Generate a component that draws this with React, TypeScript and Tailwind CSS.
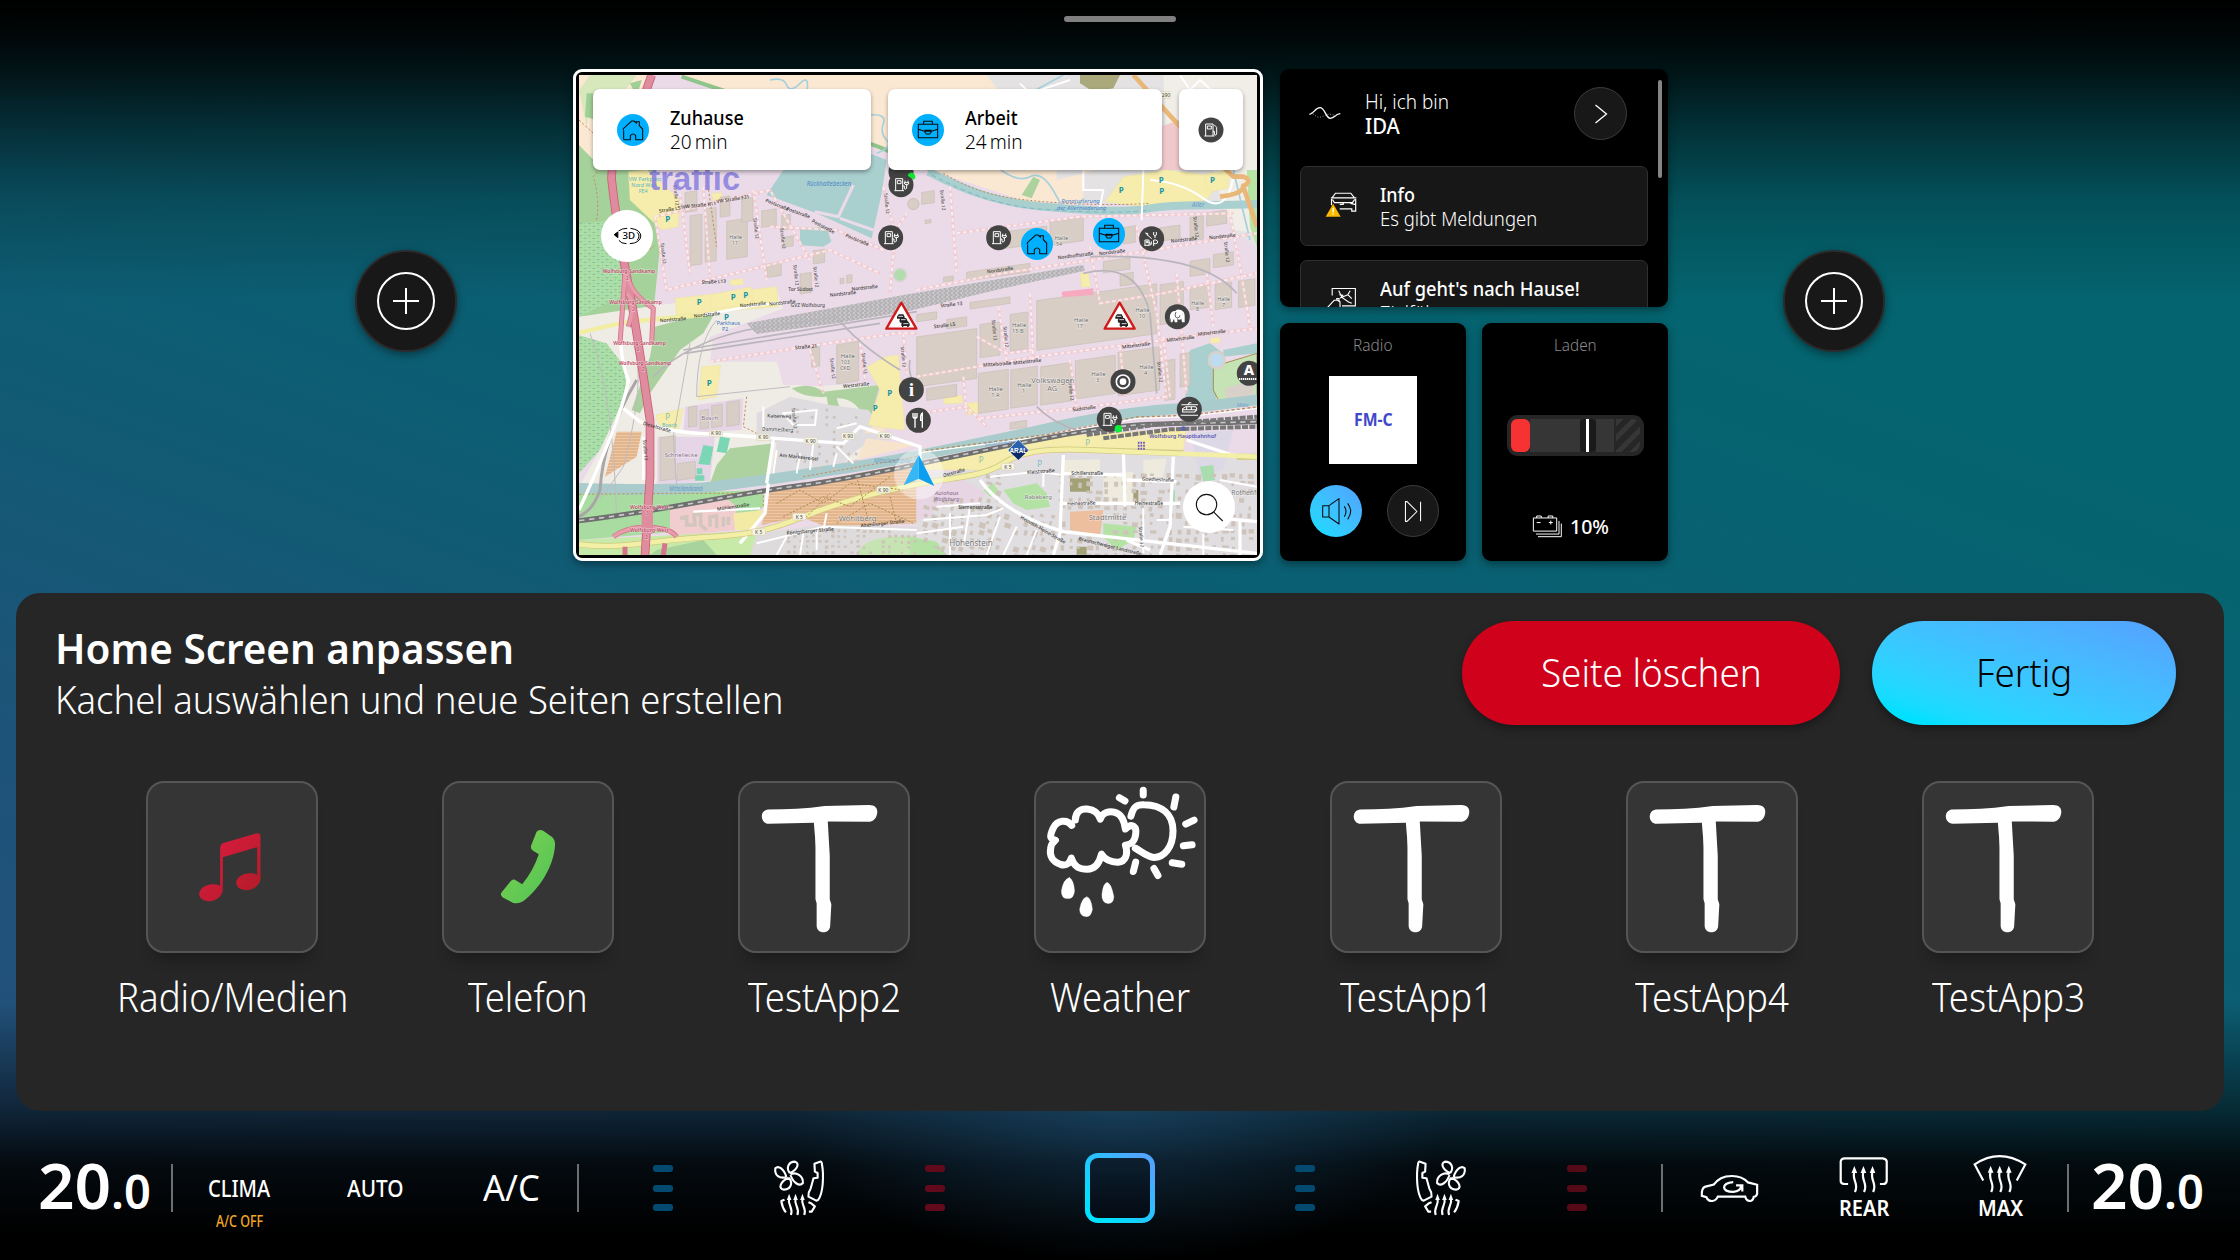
import React, { useLayoutEffect, useRef, useState } from "react";

/* Text squeezed horizontally to the width of its box, for the condensed cockpit typeface. */
function Fit({ children, className = "" }: { children: string; className?: string }) {
  const outer = useRef<HTMLSpanElement>(null);
  const inner = useRef<HTMLSpanElement>(null);
  const [k, setK] = useState(1);
  useLayoutEffect(() => {
    if (outer.current && inner.current) setK(outer.current.clientWidth / inner.current.offsetWidth);
  }, [children]);
  return (
    <span ref={outer} className={`block shrink-0 ${className}`}>
      <span ref={inner} className="inline-block origin-left whitespace-nowrap" style={{ transform: `scaleX(${k})` }}>
        {children}
      </span>
    </span>
  );
}

/* ---------- map ---------- */

const halls: [number, number, number, number][] = [
  [360, 465, 36, 150], [405, 445, 34, 160], [470, 480, 62, 115], [515, 415, 34, 70], [575, 450, 44, 50],
  [450, 410, 30, 60], [590, 610, 44, 40], [690, 640, 34, 60], [730, 570, 34, 40], [345, 395, 36, 60],
  [1280, 510, 150, 50], [1440, 480, 100, 70], [1190, 625, 190, 26], [1660, 500, 36, 50], [1770, 500, 60, 40],
  [1860, 470, 40, 70], [1910, 455, 60, 40], [1600, 600, 80, 34], [1650, 640, 40, 36], [1860, 600, 60, 46],
  [1930, 580, 60, 40], [1860, 680, 60, 66], [1935, 670, 50, 76], [2005, 660, 50, 80],
  [1040, 820, 180, 150], [1230, 790, 60, 100], [1320, 760, 54, 110], [1400, 700, 360, 150], [1770, 670, 70, 120],
  [1225, 935, 90, 120], [1322, 925, 80, 115], [1412, 915, 92, 115], [1516, 895, 120, 115], [1644, 870, 125, 130],
  [1785, 900, 30, 120], [1830, 880, 30, 100], [1070, 980, 90, 36], [1320, 1085, 50, 20],
  [800, 850, 66, 118], [725, 860, 24, 60], [355, 1040, 26, 60], [390, 1050, 26, 56], [425, 1035, 32, 66],
  [470, 1025, 38, 72], [270, 1130, 46, 130], [322, 1208, 54, 50], [1040, 760, 60, 22],
  [1200, 720, 120, 20], [1130, 775, 60, 28], [635, 465, 26, 44], [640, 530, 30, 30], [810, 655, 12, 16], [830, 645, 16, 24],
  [1055, 395, 38, 36], [1065, 480, 18, 10], [1120, 650, 30, 14],
];

const parking = [
  "M175 335L232 330 330 420 325 500 275 510 180 420Z", "M270 455L325 450 325 500 275 508Z", "M315 715L620 680 625 740 320 765Z",
  "M420 705L545 680 548 735 425 745Z", "M395 920L452 916 440 1010 385 1020Z", "M258 1065L340 1045 325 1110 268 1098Z",
  "M945 890L985 885 1005 1110 950 1105 895 1095 930 990 890 920Z", "M1605 425L1660 350 1790 330 1960 350 1910 420 1720 440Z",
  "M1910 340L1980 332 1975 385 1920 395 1905 370Z", "M1050 1205L1450 1130 1850 1105 1840 1170 1430 1160 1240 1230 1060 1230Z",
  "M1530 640L1555 638 1562 680 1535 682Z", "M1120 1010L1175 1005 1178 1030 1122 1032Z", "M1190 1030L1226 1026 1226 1060 1192 1064Z",
  "M425 400L455 398 458 420 430 422Z", "M480 660L520 656 520 674 482 676Z", "M1920 835L1950 832 1950 848 1922 850Z",
];

const pinkRoads = [
  "M255 470L600 390 720 600", "M255 470L290 690 780 570 930 640", "M330 400L360 640", "M400 380L420 650", "M550 390L590 660",
  "M600 500L800 510 940 570 1010 460", "M940 380L975 520 960 700", "M420 905L640 870 980 820 1040 820", "M720 870L760 1000M870 850L885 960M1000 820L1010 940",
  "M1040 690L1300 640 1560 600 2061 520", "M1140 380L1160 640M1160 520L1530 470 1990 460", "M1560 560L1590 730 1780 700 2061 640",
  "M1700 500L1760 760 1790 1020", "M1980 460L2010 620 2040 800", "M1040 950L1400 890 1700 850 2061 805",
  "M1220 830L1310 880 1390 870M1285 740L1310 900M1380 700L1390 900M1500 900L1520 1040M1650 860L1665 1010M1780 830L1800 1010",
  "M1180 950L1190 1060M1230 1075L1520 1045 1790 1010", "M1050 1060L1190 1040 1250 1100", "M1910 640L1930 800", "M1820 640L1850 1000",
];

const hood = (() => {
  const out: [number, number, number, number, number][] = [];
  let s = 11;
  const r = () => ((s = (s * 16807) % 2147483647) / 2147483647);
  for (let x = 1060; x < 2050; x += 27)
    for (let y = 1190; y < 1480; y += 24) {
      if (y < 1235 - (x > 1460 ? 20 : 0)) continue;
      if (x < 1240 && y < 1290) continue;
      if (x > 1300 && x < 1440 && y < 1350) continue;
      if (x > 1480 && x < 1610 && y > 1350 && y < 1410) continue;
      if (r() > 0.2) out.push([x + r() * 8, y + r() * 6, 7 + r() * 13, 7 + r() * 11, x < 1450 ? 18 : 3]);
    }
  for (let x = 650; x < 1040; x += 19)
    for (let y = 1408; y < 1480; y += 16) if (r() > 0.35) out.push([x, y + r() * 4, 6 + r() * 5, 6 + r() * 4, -8]);
  for (let x = 680; x < 900; x += 22)
    for (let y = 1045; y < 1240; y += 22) if (r() > 0.6) out.push([x, y, 8, 8, 20]);
  return out;
})();

const tiny: [string, number, number, number, string][] = [
  ["Straße L51", 268, 458, -9, "#333"], ["VW Straße K11", 338, 446, -6, "#333"], ["VW Straße F31", 440, 430, -9, "#333"],
  ["Poststraße", 585, 425, 22, "#333"], ["Poststraße", 648, 450, 20, "#333"], ["Poststraße", 724, 486, 28, "#333"],
  ["Poststraße", 825, 530, 22, "#333"], ["Nordstraße", 510, 742, -6, "#333"], ["Nordstraße", 598, 737, -6, "#333"],
  ["Nordstraße", 372, 773, -6, "#333"], ["Nordstraße", 270, 787, -5, "#333"], ["Straße L13", 395, 672, -3, "#333"],
  ["Nordstraße", 780, 710, -6, "#333"], ["Nordstraße", 845, 692, -6, "#333"], ["Tor Südost", 655, 692, 0, "#444"],
  ["GVZ Wolfsburg", 662, 740, 0, "#555"], ["Nordstraße", 1252, 640, -8, "#333"], ["Nordhoffstraße", 1464, 598, -7, "#333"],
  ["Nordstraße", 1588, 586, -7, "#333"], ["Nordstraße", 1803, 548, -6, "#333"], ["Nordstraße", 1918, 538, -6, "#333"],
  ["Mittelstraße", 1240, 920, -4, "#333"], ["Mittelstraße", 1330, 914, -6, "#333"], ["Mittelstraße", 1657, 866, -7, "#333"],
  ["Mittelstraße", 1790, 846, -7, "#333"], ["Mittelstraße", 1884, 828, -7, "#333"], ["Südstraße", 1508, 1054, -7, "#333"],
  ["Straße L5", 1092, 805, -7, "#333"], ["Straße 21", 676, 868, -5, "#333"], ["Weststraße", 820, 984, -6, "#333"],
  ["Dieselstraße", 218, 1094, 16, "#333"], ["Kaiserweg", 592, 1072, 2, "#333"], ["Dammesberg", 576, 1112, 2, "#333"],
  ["Am Markekreisel", 628, 1190, 6, "#333"], ["Mühlenstraße", 442, 1352, -8, "#333"], ["Königsberger Straße", 650, 1424, -5, "#333"],
  ["Altenburger Straße", 872, 1402, -6, "#333"], ["Schillerstraße", 1504, 1244, 0, "#333"], ["Heinestraße", 1492, 1336, -2, "#333"],
  ["Heinestraße", 1694, 1334, 0, "#333"], ["Goethestraße", 1716, 1262, 2, "#333"], ["Heinrich-Heine-Straße", 1350, 1375, 30, "#333"],
  ["Braunschweiger Landstraße", 1525, 1440, 14, "#333"], ["Siemensstraße", 1165, 1346, 0, "#333"],
  ["Straße 13", 1112, 742, -6, "#333"], ["Kleiststraße", 1372, 1242, -4, "#333"], ["Oststraße", 1120, 1252, -16, "#333"],
];

const areaLabels: [string, number, number, number, string][] = [
  ["Halle", 484, 538, 16, "#666"], ["11", 492, 556, 16, "#666"], ["Halle", 1460, 540, 17, "#666"], ["54", 1464, 558, 16, "#666"],
  ["Halle", 1518, 785, 18, "#666"], ["17", 1526, 803, 16, "#666"], ["Halle", 1332, 800, 18, "#666"], ["15 B", 1332, 818, 17, "#666"],
  ["Halle", 1702, 756, 18, "#666"], ["10", 1712, 774, 17, "#666"], ["Halle", 1870, 734, 16, "#666"], ["8", 1884, 752, 16, "#666"],
  ["Halle", 1948, 722, 16, "#666"], ["7", 1962, 740, 16, "#666"], ["Halle", 1262, 994, 18, "#666"], ["1 A", 1270, 1012, 17, "#666"],
  ["Halle", 1348, 982, 18, "#666"], ["1", 1362, 1000, 17, "#666"], ["Halle", 1570, 948, 18, "#666"], ["3", 1584, 966, 17, "#666"],
  ["Halle", 1714, 928, 18, "#666"], ["4", 1728, 946, 17, "#666"], ["Halle", 818, 894, 18, "#666"], ["103", 818, 912, 16, "#666"],
  ["CKD", 816, 930, 16, "#666"], ["Bosch", 400, 1079, 18, "#866a8a"], ["Schnellecke", 290, 1192, 18, "#866a8a"],
  ["Volkswagen", 1390, 970, 23, "#777"], ["AG", 1438, 992, 22, "#777"], ["Hohenstein", 1144, 1458, 24, "#777"],
  ["Wohltberg", 812, 1382, 23, "#777"], ["Stadtmitte", 1562, 1380, 23, "#777"], ["Rothenfelde", 1990, 1304, 20, "#777"],
  ["Rabeberg", 1370, 1316, 18, "#777"],
];

function Pin({ x, y, children }: { x: number; y: number; children?: React.ReactNode }) {
  return (
    <g transform={`translate(${x} ${y})`}>
      <circle r="37.5" fill="#434343" />
      <g fill="none" stroke="#fff" strokeWidth="3">{children}</g>
    </g>
  );
}
const Charger = () => (
  <g>
    <path d="M-16 18V-18H5V18M-20 18H9M-11-12H0V-3H-11ZM5 4H10V12Q14 16 17 10V-2M12-12V-5M21-12V-5M10-6H23V-2Q17 5 11-2Z" />
  </g>
);
const Fuel = () => <path d="M-16 18V-18H6V18M-20 18H10M-11-12H1V-3H-11ZM6 4H10V14Q15 18 17 12V-8L9-16" />;
const House = () => (
  <path d="M-28 29V2M-28 29H-8V17Q0 7 8 17V29H29V0M-29 1V-4L-4-27H3L10-21V-25H19V-13L29-3V2" fill="none" stroke="#0b0b0b" strokeWidth="3.2" />
);
const Case = () => (
  <path d="M-29-17H29V23H-29ZM-13-17V-26H13V-17M-29-2L-10 4H10L29-2M-9 1H9V7L5 12H-5L-9 7Z" fill="none" stroke="#0b0b0b" strokeWidth="3.2" />
);
function Jam({ x, y }: { x: number; y: number }) {
  return (
    <g transform={`translate(${x} ${y})`}>
      <path d="M0-50L45 28H-45Z" fill="#fff" stroke="#cf1b1b" strokeWidth="7" strokeLinejoin="round" />
      <path d="M-13-8L-8-15H6L10-8V-2H-13ZM-6 2L-1-4H14L18 3V10H-4ZM0 13L5 6H20L25 13V20H22V23H17V20H6V23H2V20H0Z" fill="#222" />
      <path d="M-9-9H5M-1 1H13M6 13H21" stroke="#fff" strokeWidth="2.5" />
    </g>
  );
}

function CityMap() {
  return (
    <svg viewBox="27 45 2034 1440" className="block h-full w-full" fontFamily="'Noto Sans', sans-serif">
      <defs>
        <pattern id="marsh" width="26" height="18" patternUnits="userSpaceOnUse">
          <rect width="26" height="18" fill="#aedfa8" />
          <path d="M2 5H11M15 13H24" stroke="#63ac96" strokeWidth="2" />
          <path d="M5 14l3-5M18 6l2-4" stroke="#86c47f" strokeWidth="2" />
        </pattern>
        <pattern id="plots" width="20" height="9" patternUnits="userSpaceOnUse">
          <rect width="20" height="9" fill="#e3b58d" />
          <path d="M0 1H20" stroke="#f0d0b0" strokeWidth="2.5" />
        </pattern>
        <pattern id="yard" width="14" height="12" patternUnits="userSpaceOnUse">
          <rect width="14" height="12" fill="#cfcccf" />
          <path d="M0 3H9M4 9H14" stroke="#999" strokeWidth="3" />
        </pattern>
      </defs>
      <rect x="27" y="45" width="2034" height="1440" fill="#ebdbe9" />
      {/* farmland, town and park areas */}
      <path d="M27 45H330L500 100 900 258 1080 330 1370 425 1540 430 1620 400 1600 45ZM27 45V300L180 330 240 45Z" fill="#fbe8d3" />
      <path d="M245 45H335L500 100 900 258 1020 330H170Z" fill="#ebdbe9" />
      <path d="M335 50L500 105 930 262 1080 328" fill="none" stroke="#8fc48a" strokeWidth="12" />
      <path d="M1250 45H2061V560L1990 520 1960 440 1540 430V330H1460V360L1580 330V200L1300 110Z" fill="#e4e2e3" />
      <path d="M1780 45H2061V520L1990 510 1960 440 1930 330 1790 260Z" fill="#f1eee8" />
      <path d="M1530 45H1650L1630 85 1570 95 1530 70Z" fill="#a9a97c" />
      <path d="M1770 200L1830 180 1860 330H1770Z" fill="#f0c9cc" />
      <path d="M1355 405L1390 350 1410 360 1385 415Z" fill="#acd29e" />
      <path d="M2030 330H2061V560L2040 500Z" fill="#b7e3a5" />
      <path d="M27 90L60 45H200L150 110 130 160 110 120 60 140 50 200Z" fill="#cfe7b8" opacity=".8" />
      <path d="M50 100H90L80 180 45 170ZM180 70L215 60 200 110Z" fill="#a0cf95" />
      <path d="M27 255L100 330H250V470L270 560 250 760 27 770Z" fill="#a5d29a" />
      <path d="M27 490L170 480 175 700 27 770Z" fill="url(#marsh)" />
      <path d="M27 825L110 850 165 920 170 1000 90 1170 27 1240Z" fill="url(#marsh)" />
      <path d="M27 770L270 735 620 690 640 745 420 830 380 920 340 1100 255 1280H27L90 1170 170 1000 165 920 110 850 27 825Z" fill="#efece5" />
      <path d="M255 800L440 750 400 820 330 870 240 1000 210 1060 185 1050 240 890Z" fill="#aad09f" />
      <path d="M380 840L640 870 700 980 900 970 890 1190 600 1260 380 1270 320 1150 340 960Z" fill="#efece6" />
      <path d="M430 830L1060 690V970L640 975 620 905 420 905Z" fill="#ebdbe9" />
      <path d="M345 1040L520 1015 515 1110 340 1120ZM262 1130L435 1130 420 1262 262 1272Z" fill="#e6d5e6" />
      <path d="M665 985Q720 965 760 995 850 985 930 975L895 1095Q860 1010 800 1015L808 1040H775L770 1010Q700 1015 665 985Z" fill="#aed29f" />
      <path d="M560 1060L660 1010 780 1035 895 1050 950 1120 860 1170 800 1230 600 1260 620 1150 560 1130Z" fill="#dedcdf" />
      <path d="M880 1120L945 1070 945 1115ZM890 1135L1040 1155 860 1200Z" fill="#f8e3cc" />
      <path d="M480 1165L610 1150 585 1265 420 1270 440 1215Z" fill="#aed29f" />
      <path d="M400 1155L430 1160 420 1215 385 1212ZM450 1130L480 1135 470 1180 440 1175ZM380 1225H397V1243H380ZM375 1246H403V1262H375Z" fill="#7ad6b4" />
      <path d="M140 1115H215L200 1190 105 1250Z" fill="url(#plots)" />
      <path d="M27 1295L300 1300 580 1290 580 1340 500 1400 27 1440Z" fill="#a9dca0" />
      <path d="M300 1350L470 1315 500 1340 495 1410 300 1430Z" fill="#f2cdd0" />
      <path d="M490 1360L580 1350 560 1410 495 1410Z" fill="#f3eaa6" />
      <path d="M27 1440L500 1415 620 1440 560 1485H27Z" fill="#c8eaa9" />
      <path d="M260 1470L400 1440 440 1485H240Z" fill="#a8d39d" />
      <path d="M600 1290L960 1222 1040 1230 1040 1390 770 1400 690 1370 575 1395Z" fill="url(#plots)" />
      <path d="M560 1420L760 1395 1040 1400V1485H540Z" fill="#dddbdc" />
      <path d="M860 1485Q880 1420 1040 1430V1485Z" fill="#c6e3b2" />
      <path d="M1040 1240L1240 1230 1450 1180 2061 1190V1485H1040Z" fill="#e0dee0" />
      <path d="M1040 1270L1170 1255 1250 1300 1220 1330 1100 1340 1080 1370 1040 1380Z" fill="#e8d5e3" />
      <path d="M1300 1290L1400 1270 1430 1300 1440 1340 1370 1350 1330 1330ZM1600 1390L1700 1400 1690 1440 1640 1470 1600 1430ZM1020 1430L1100 1445 1130 1485H1020ZM1240 1290L1270 1270 1290 1300 1260 1310Z" fill="#b4e2a4" />
      <path d="M1500 1355L1600 1350 1590 1425 1500 1410Z" fill="#eebf9f" />
      <path d="M1500 1255H1560V1295H1500ZM1675 1290H1705V1325H1675ZM1520 1460H1550V1485H1520Z" fill="#a3a277" />
      <path d="M1600 1240L1690 1235V1335H1600ZM1480 1200L1590 1198V1240H1480ZM1720 1200L1790 1195 1780 1250 1720 1255Z" fill="#eeeade" />
      <path d="M1860 1120L1990 1110 1960 1230 1890 1250Z" fill="#dcd8e6" />
      <path d="M1890 1220L1930 1215 1935 1260 1900 1265ZM1800 1290H1815V1325H1800Z" fill="#a9ddb0" />
      {parking.map((d) => (<path key={d} d={d} fill="#f6ecab" stroke="#e9dfa0" strokeWidth="1" />))}
      {/* water */}
      <path d="M590 405L640 330 850 260 950 300 935 400 905 535 740 460ZM690 508L770 500 784 545 760 560 690 556Z" fill="#aacfcf" />
      <path d="M735 455L805 470 850 375M810 475L910 510" fill="none" stroke="#ebdbe9" strokeWidth="9" />
      <path d="M1075 335C1200 400 1300 430 1420 440S1650 460 1740 445 1900 440 2061 432" fill="none" stroke="#a9cfcf" strokeWidth="24" />
      <path d="M1085 345C1200 405 1300 440 1420 448S1650 462 1740 450" fill="none" stroke="#7db8c4" strokeWidth="3" strokeDasharray="14 10" />
      <path d="M1120 340C1220 400 1300 415 1420 425S1650 436 1740 430" fill="none" stroke="#b78b5a" strokeWidth="3" strokeDasharray="6 6" />
      <path d="M600 60Q640 50 650 75T690 70 710 100M900 165Q950 160 940 190T950 240 920 280M1280 320Q1340 370 1380 350T1460 410 1540 415M1480 45L1360 110M1990 330L2040 540" fill="none" stroke="#a5d0dc" strokeWidth="5" />
      <path d="M1860 870L1920 850 1960 880 1935 960 1940 1040 1840 1070Z" fill="#a9cfcf" />
      <path d="M1960 870L2061 850V880L1960 890Z" fill="#a9cfcf" />
      <path d="M1930 920L2061 880V1010L1950 1030 1930 990Z" fill="#c5e3b4" stroke="#a98e55" strokeWidth="3" />
      <circle cx="1940" cy="900" r="24" fill="#bcdcf0" stroke="#d9d0c9" strokeWidth="7" />
      <path d="M1965 985L2050 960V1010L1970 1020Z" fill="#d9d0c9" />
      <path d="M27 1285C200 1290 350 1290 430 1280S850 1225 1000 1195 1300 1135 1420 1108 1700 1050 1850 1045L2061 1020" fill="none" stroke="#a9cbcb" strokeWidth="32" />
      <path d="M1050 1178L1430 1128 1700 1075 1850 1070 2061 1045" fill="none" stroke="#fff" strokeWidth="4" />
      <path d="M1050 1174L1430 1124 1700 1071 1850 1066 2061 1041" fill="none" stroke="#b78b5a" strokeWidth="4" strokeDasharray="9 7" />
      <path d="M27 1303L300 1300 580 1300 580 1340" fill="none" stroke="#b89a4e" strokeWidth="3" strokeDasharray="7 6" />
      {/* buildings */}
      {halls.map(([x, y, w, h], i) => (
        <path key={i} d={`M${x} ${y + w * 0.06}L${x + w} ${y - w * 0.08}V${y + h - w * 0.08}L${x} ${y + h + w * 0.06}Z`} fill="#d8cec6" stroke="#c3b7ad" strokeWidth="1.5" />
      ))}
      {hood.map(([x, y, w, h, a], i) => (
        <rect key={i} x={x} y={y} width={w} height={h} fill="#cdc3ba" transform={`rotate(${a} ${x} ${y})`} />
      ))}
      <circle cx="1030" cy="432" r="17" fill="#d8cec6" stroke="#c3b7ad" strokeWidth="2" />
      <path d="M1475 695L1570 685V705L1478 712Z" fill="#f6a9bf" />
      <path d="M330 1375L350 1370V1395H375L372 1365 392 1362V1395L410 1410M420 1400V1370L440 1368V1405M460 1370V1400M475 1370V1395" fill="none" stroke="#d3c6bd" strokeWidth="11" />
      {/* streets */}
      {pinkRoads.map((d) => (
        <g key={d} fill="none" opacity=".75">
          <path d={d} stroke="#f3c6ca" strokeWidth="9" />
          <path d={d} stroke="#fdf3f3" strokeWidth="6" strokeDasharray="11 8" />
        </g>
      ))}
      <path d="M530 790L800 742 1000 705 1300 655 1540 615 1545 632 1300 685 1020 752 800 790 560 822Z" fill="url(#yard)" />
      <path d="M250 950Q350 850 530 810L800 770Q860 850 990 930M1020 900Q1010 960 1060 1000M340 870L1040 755M345 880L930 790M1540 640Q1700 600 1740 760L1760 1000M1560 590Q1900 580 2000 700M1400 1040Q1450 1090 1520 1110" fill="none" stroke="#b9b5bb" strokeWidth="5" />
      <path d="M60 820Q130 1000 140 1380M190 850Q230 960 160 1220L90 1320M360 850L310 1130 320 1280M440 780Q380 850 380 1010L660 980" fill="none" stroke="#bfbcc0" strokeWidth="3" />
      <path d="M200 960Q100 1130 90 1290 70 1350 27 1370" fill="none" stroke="#aaa6a8" strokeWidth="9" />
      <g fill="none">
        <path d="M27 1382C300 1350 500 1300 700 1275S1200 1175 1450 1130 1700 1095 2061 1085" stroke="#6f6f6f" strokeWidth="15" />
        <path d="M27 1382C300 1350 500 1300 700 1275S1200 1175 1450 1130 1700 1095 2061 1085" stroke="#c8c8c8" strokeWidth="5" strokeDasharray="16 14" />
        <path d="M1550 1125L1750 1095 2061 1070M1600 1135L1800 1108 2061 1100" stroke="#777" strokeWidth="12" strokeDasharray="18 4" />
      </g>
      <g fill="none" stroke="#fff">
        <path d="M150 790Q150 900 175 960 160 1060 27 1350M160 1045L210 1085Q300 1120 440 1122L820 1150 870 1100 1050 1160V1230M595 1270L585 1360 510 1450M610 1140L590 1270" strokeWidth="10" />
        <path d="M1480 1185L1470 1420 1450 1485M1230 1260Q1300 1360 1480 1415L2061 1480M1470 1330H1830M1660 1170L1665 1340M1810 1190L1800 1400 1770 1485M1670 1260L1820 1265M1480 1240L1660 1245M1670 1440L1740 1470M2010 1380V1485M1900 1370L2061 1385M1850 1140L2000 1190" strokeWidth="10" />
        <path d="M1060 1380L1250 1365 1300 1345M1040 1420L1180 1400M1140 1360V1485M1200 1340L1180 1460M1100 1340L1230 1330M1290 1370L1250 1485M1340 1400L1300 1485M1400 1410L1370 1485M1260 1250L1400 1235 1480 1245M1420 1240V1280M1720 1345V1480M1760 1380H1800M1840 1400L1990 1410M1900 1420V1485M1950 1260L2061 1280" strokeWidth="6" />
        <path d="M640 1060L740 1050 735 1095H670ZM580 1040V1110H670M620 1170L610 1240M690 1180L680 1240M730 1150L720 1230M800 1180L790 1220M860 1090L800 1105M800 1160L850 1210M650 1430L620 1485M700 1420L690 1485M740 1410V1470M560 1450L760 1400 1040 1410M770 1360L760 1410" strokeWidth="6" />
        <path d="M270 780L400 765 560 735 640 728M370 1355L570 1345M220 1130V1260" strokeWidth="7" />
        <path d="M1350 70L1380 100 1500 60M1540 330V390H1600L1590 440M1720 330L1715 480M1830 45L1860 90 1890 60 1930 95M1740 360Q1830 365 1900 415T1990 350" strokeWidth="6" />
      </g>
      <path d="M27 818L150 790 230 780 400 765" fill="none" stroke="#f1eda3" strokeWidth="13" />
      <path d="M27 1453C150 1470 250 1440 400 1432S600 1410 700 1370 900 1300 1030 1275 1240 1250 1300 1210 1450 1165 1550 1170L1840 1180M2000 1190H2061" fill="none" stroke="#cfc97c" strokeWidth="18" />
      <path d="M27 1453C150 1470 250 1440 400 1432S600 1410 700 1370 900 1300 1030 1275 1240 1250 1300 1210 1450 1165 1550 1170L2061 1190" fill="none" stroke="#f3efa6" strokeWidth="14" />
      <path d="M1690 45L1830 200 1990 350 2020 350Q2050 360 2020 380L2061 500M2020 370Q2030 400 1950 410" fill="none" stroke="#e9b778" strokeWidth="14" />
      {/* motorway */}
      <g fill="none" strokeLinejoin="round">
        <path d="M245 45L215 130Q120 280 125 360C140 500 165 620 180 700S225 980 240 1080V1250L225 1485" stroke="#c9607a" strokeWidth="26" />
        <path d="M170 640Q180 700 250 745L245 850M165 640L150 850M170 700Q200 720 175 800M130 1430Q170 1400 235 1402T320 1430M165 1460V1485M285 1450L280 1485" stroke="#d5748a" strokeWidth="15" />
        <path d="M245 45L215 130Q120 280 125 360C140 500 165 620 180 700S225 980 240 1080V1250L225 1485" stroke="#e08c9f" strokeWidth="21" />
        <path d="M170 640Q180 700 250 745L245 850M165 640L150 850M170 700Q200 720 175 800M130 1430Q170 1400 235 1402T320 1430" stroke="#e79cac" strokeWidth="10" />
        <path d="M232 1340V1420" stroke="#e08c9f" strokeWidth="34" />
      </g>
      <path d="M620 1330L690 1290 760 1330 840 1270 1000 1290M640 1370L760 1310 840 1340 960 1250M700 1380L780 1300M800 1390L900 1330 1030 1390M860 1250L900 1400M960 1310L980 1390" fill="none" stroke="#a98a4e" strokeWidth="3" strokeDasharray="6 5" />
      <path d="M27 180L70 220 120 250M80 480Q90 420 70 350L110 300M180 600L250 560M530 1010L520 1100 560 1120M410 350L440 560M700 1250L1040 1190" fill="none" stroke="#c98b5c" strokeWidth="3" strokeDasharray="7 6" />
      <circle cx="990" cy="645" r="20" fill="#b3dcae" stroke="#d9d5d9" strokeWidth="5" />
      {/* labels */}
      {tiny.map(([t, x, y, a, c], i) => (
        <text key={i} x={x} y={y} fontSize="14.5" fill={c} fontWeight="500" transform={`rotate(${a} ${x} ${y})`}>{t}</text>
      ))}
      {[[310, 375], [550, 475], [272, 550], [630, 505], [670, 615], [730, 620], [942, 400], [1110, 390], [1870, 470], [1762, 905], [1265, 780], [1300, 800], [992, 860], [875, 880], [780, 895], [1495, 960], [1962, 545], [665, 1045], [218, 1140], [1706, 1400]].map(([x, y], i) => (
        <text key={i} x={x} y={y} fontSize="14" fill="#333" transform={`rotate(84 ${x} ${y})`}>Straße 12</text>
      ))}
      {areaLabels.map(([t, x, y, s, c], i) => (
        <text key={i} x={x - 6} y={y} fontSize={s} fill={c} stroke="#fff" strokeWidth="3" strokeOpacity=".6" paintOrder="stroke">{t}</text>
      ))}
      {[["Wolfsburg-Sandkamp", 98, 640], ["2", 168, 660], ["Wolfsburg-Sandkamp", 118, 732], ["2", 186, 752], ["Wolfsburg-Sandkamp", 130, 854], ["2", 200, 874], ["Wolfsburg-Sandkamp", 146, 914], ["2", 216, 934], ["Wolfsburg-West", 180, 1346], ["3", 228, 1364], ["Wolfsburg-West", 180, 1416], ["2", 226, 1436]].map(([t, x, y], i) => (
        <text key={i} x={x} y={y} fontSize="15" fontWeight="600" fill="#b9475f" stroke="#fff" strokeWidth="2.5" strokeOpacity=".55" paintOrder="stroke">{t}</text>
      ))}
      <g fill="#1b93a8" fontSize="24" fontWeight="700" fontFamily="'Noto Sans', sans-serif">
        {[[286, 487], [380, 736], [482, 720], [520, 714], [462, 780], [410, 977], [952, 1008], [908, 1054], [1646, 400], [1766, 368], [1768, 402], [1920, 370]].map(([x, y]) => (<text key={`${x}-${y}`} x={x} y={y}>P</text>))}
        {[[286, 1080], [1226, 1208], [1402, 1222], [1546, 1158]].map(([x, y]) => (<text key={`${x}-${y}`} x={x} y={y} opacity=".5" fontWeight="400">P</text>))}
      </g>
      <g fill="#4a86c8" fontSize="19" fontStyle="italic">
        <text x="710" y="378" textLength="134" lengthAdjust="spacingAndGlyphs">Rückhaltebecken</text>
        <text x="1474" y="430" fontSize="18">Renaturierung</text>
        <text x="1460" y="449" fontSize="18">der Allerniederung</text>
        <text x="298" y="1292" textLength="100" lengthAdjust="spacingAndGlyphs" opacity=".75">Mittellandkanal</text>
        <text x="1246" y="1160" transform="rotate(-5 1246 1160)" opacity=".6" textLength="94" lengthAdjust="spacingAndGlyphs">Mittellandkanal</text>
        <text x="2000" y="1040" fontSize="16" opacity=".6">Mitte</text>
        <text x="912" y="1208" textLength="110" lengthAdjust="spacingAndGlyphs" opacity=".6">Mittellandkanal</text>
        <text x="1866" y="440" opacity=".7">Aller</text>
      </g>
      <g fill="#58b8c4" fontSize="16"><text x="176" y="362">VW Parkplatz</text><text x="184" y="380">Nord Wob</text><text x="206" y="398">FE4</text><text x="276" y="1100">Bosch</text></g>
      <g fill="#3c6fc4" fontSize="16"><text x="440" y="796">Parkhaus</text><text x="456" y="813">P2</text></g>
      <text x="1738" y="1134" fontSize="17" fontWeight="600" fill="#5a55b4" textLength="200" lengthAdjust="spacingAndGlyphs">Wolfsburg Hauptbahnhof</text>
      <circle cx="1840" cy="1106" r="7" fill="#5a62b4" />
      <path d="M1706 1145V1170M1714 1145V1170M1722 1145V1170" stroke="#6a55c0" strokeWidth="5" strokeDasharray="6 3" />
      <g fontSize="15" fill="#444">
        {[["K 90", 438, 1122], ["K 90", 580, 1134], ["K 90", 722, 1144], ["K 90", 834, 1130], ["K 90", 944, 1129], ["K 90", 940, 1291], ["K 5", 688, 1372], ["K 5", 566, 1418], ["K 5", 1314, 1222], ["L 290", 1782, 107]].map(([t, x, y]) => (
          <g key={`${t}${x}`}><rect x={Number(x) - 20} y={Number(y) - 12} width="40" height="20" rx="4" fill="#f7f4e2" stroke="#cfcab0" strokeWidth="1.5" /><text x={x} y={Number(y) + 4} textAnchor="middle">{t}</text></g>
        ))}
      </g>
      <text x="1130" y="1305" textAnchor="middle" fontSize="17" fontStyle="italic" fill="#8a6a92">Autohaus</text>
      <text x="1130" y="1323" textAnchor="middle" fontSize="17" fontStyle="italic" fill="#8a6a92">Wolfsburg</text>
      <text x="238" y="390" fontSize="98" fontWeight="700" fill="#7f78e0" fillOpacity=".78" fontFamily="'Liberation Sans', sans-serif">traffic</text>
      {/* pins */}
      <Pin x={993} y={335} />
      <Pin x={993} y={374}><Charger /></Pin>
      <path d="M1013 347a11 11 0 0 1 21-3 10 10 0 0 1-3 15Z" fill="#12e834" />
      <Pin x={962} y={533}><Charger /></Pin>
      <Pin x={1286} y={533}><Charger /></Pin>
      <Pin x={1745} y={536}>
        <path d="M-18-18l4 6 14 12M-18-16h6v6M6-20v9q4 6 8 0v-9M10-8V-2M-20 20V4H-8V20M-22 20H-6M-17 8h6v4h-6M-8 12h3v6q3 2 4-2V8M6 22V4H12Q18 5 18 10T12 15H6" />
      </Pin>
      <Pin x={1822} y={770}>
        <path d="M-24 14Q-22 8-22-4-18-18-6-17 0-24 11-20 22-15 22-2V17H14L12 6Q6 12 0 6V17H-8L-10 6-15 17H-20V4Z" fill="#fff" stroke="none" />
        <path d="M-4-14Q-10 0-1 4 8 4 8-4M14-8H15" stroke="#434343" strokeWidth="2.5" />
      </Pin>
      <Pin x={1024} y={989} />
      <text x="1024" y="1008" textAnchor="middle" fontSize="58" fontWeight="700" fill="#fff" fontFamily="'Liberation Serif', serif">i</text>
      <Pin x={1045} y={1081}>
        <path d="M-16-22V-10Q-10-2-4-10V-22M-10-22V22M12 22V0H7V-12Q8-20 12-22Z" strokeWidth="4" />
      </Pin>
      <Pin x={1659} y={965}><circle r="20" strokeWidth="5" /><circle r="10" fill="#fff" stroke="none" /></Pin>
      <Pin x={1858} y={1048}>
        <path d="M-26 18H26M-24-14H26M-20-2L-10-8H18Q24-4 22 2L16 8H-20ZM-20 1H20M-4-14L0-20H6M-8-6V0M6-6V0" strokeWidth="3.2" />
      </Pin>
      <Pin x={1618} y={1078}><Charger /></Pin>
      <circle cx="1645" cy="1106" r="11" fill="#0cf03c" />
      <Pin x={2038} y={940} />
      <text x="2037" y="946" textAnchor="middle" fontSize="44" fontWeight="800" fill="#fff">A</text>
      <path d="M2007 957H2061" stroke="#fff" strokeWidth="6" strokeDasharray="4 2" />
      <Jam x={994} y={778} />
      <Jam x={1649} y={778} />
      <g transform="translate(1401 552)"><circle r="48" fill="#00b0ff" /><House /></g>
      <g transform="translate(1617 522)"><circle r="48" fill="#00b0ff" /><Case /></g>
      <path d="M1345 1139L1376 1170 1345 1201 1314 1170Z" fill="#2a62ae" stroke="#e8f0fa" strokeWidth="2" />
      <path d="M1345 1170L1374 1172 1345 1199 1316 1172Z" fill="#0d2a66" />
      <text x="1345" y="1178" textAnchor="middle" fontSize="19" fontWeight="800" fill="#fff" fontFamily="'Liberation Sans', sans-serif">ARAL</text>
      <circle cx="1047" cy="1243" r="75" fill="#fff" fillOpacity=".42" />
      <path d="M1046 1184L1001 1276 1046 1256Z" fill="#35b7f5" />
      <path d="M1046 1184L1093 1278 1046 1256Z" fill="#0c9ff0" />
    </svg>
  );
}

/* ---------- widgets ---------- */

function RouteCard({ w, icon, title, tw, time, mw }: { w: string; icon: React.ReactNode; title: string; tw: string; time: string; mw: string }) {
  return (
    <div className={`flex h-[81px] shrink-0 items-center rounded-[7px] bg-white pl-6 text-black shadow-[0_2px_4px_rgba(0,0,0,0.35)] ${w}`}>
      <svg viewBox="-48 -48 96 96" className="h-8 w-8 shrink-0"><circle r="48" fill="#00b0ff" />{icon}</svg>
      <div className="ml-[21px] mt-px flex flex-col">
        <Fit className={`text-[20px] font-medium leading-6 ${tw}`}>{title}</Fit>
        <Fit className={`text-[20px] font-light leading-6 ${mw}`}>{time}</Fit>
      </div>
    </div>
  );
}

function PlusButton() {
  return (
    <button className="flex h-[102px] w-[102px] shrink-0 items-center justify-center rounded-full border-2 border-[#2b2b2b] bg-[#181818] shadow-[0_3px_8px_rgba(0,0,0,0.4)]">
      <svg viewBox="0 0 58 58" className="h-[58px] w-[58px]" fill="none" stroke="#fff" strokeWidth="2">
        <circle cx="29" cy="29" r="28" />
        <path d="M29 16V42M16 29H42" />
      </svg>
    </button>
  );
}

const tileClass = "rounded-[9px] bg-black shadow-[0_3px_8px_rgba(0,0,0,0.4)]";

function IdaCard() {
  return (
    <section className={`relative h-[238px] w-[388px] overflow-hidden px-5 ${tileClass}`}>
      <div className="flex h-[97px] items-start pt-[18px]">
        <svg viewBox="118 135 96 42" className="ml-[9px] mt-[19px] h-[14px] w-8" fill="none" stroke="#fff" strokeWidth="4">
          <path d="M119 160C132 160 136 140 151 140S168 172 182 172 197 158 212 158" />
          <path d="M124 154L142 168 156 168 172 160 186 160 198 164" stroke="#999" strokeWidth="3" strokeDasharray="3 5" />
        </svg>
        <div className="ml-6 mt-[2px]">
          <Fit className="w-[84px] text-[20.5px] font-light leading-6">Hi, ich bin</Fit>
          <Fit className="w-[35px] text-[22px] font-medium leading-6">IDA</Fit>
        </div>
        <button className="ml-[125px] flex h-[53px] w-[53px] items-center justify-center rounded-full border border-[#3c3c3c] bg-[#181818]">
          <svg viewBox="0 0 14 20" className="h-5 w-[14px]" fill="none" stroke="#fff" strokeWidth="1.3"><path d="M1.5 1L12.5 10 1.5 19" /></svg>
        </button>
      </div>
      <div className="flex h-20 items-center rounded-[7px] border border-[#303030] bg-[#171717]">
        <svg viewBox="168 390 98 84" className="ml-[24px] mt-[-4px] h-7 w-8" fill="none" stroke="#fff" strokeWidth="3.6">
          <path d="M189 414L200 399H247L259 414M186 413H264M191 418L197 428H252L259 418M262 417V454H250V447H213M188 417V436M224 428V434M213 433H224M262 434L246 430" />
          <path d="M193 431L216 471H170Z" fill="#fbb900" stroke="none" />
          <path d="M193 444V458M193 461V465" strokeWidth="4" />
        </svg>
        <div className="ml-[23px] mt-[2px]">
          <Fit className="w-[35px] text-[20px] font-medium leading-6">Info</Fit>
          <Fit className="w-[157px] text-[20px] font-light leading-6">Es gibt Meldungen</Fit>
        </div>
      </div>
      <div className="mt-[14px] flex h-20 items-center rounded-[7px] border border-[#303030] bg-[#171717]">
        <svg viewBox="168 672 98 84" className="ml-[24px] mt-[-4px] h-7 w-8" fill="none" stroke="#fff" strokeWidth="3.4">
          <path d="M190 706V685H261V738H220M174 745L196 721H206L214 726V745M204 722V716H211V724" />
          <path d="M210 692L220 712 240 726 250 730M245 692L238 704 250 716M238 704L214 714M212 704L224 706" />
        </svg>
        <div className="ml-[23px] mt-[2px]">
          <Fit className="w-[200px] text-[20px] font-medium leading-6">Auf geht's nach Hause!</Fit>
          <Fit className="w-[96px] text-[20px] font-light leading-6">Zielführung</Fit>
        </div>
      </div>
      <div className="absolute right-[6px] top-[11px] h-[98px] w-1 rounded-full bg-[#858585]" />
    </section>
  );
}

function RadioCard() {
  return (
    <section className={`flex h-[238px] w-[186px] flex-col items-center ${tileClass}`}>
      <Fit className="mt-[10px] w-10 text-[17px] font-light leading-6 text-[#8a8a8a]">Radio</Fit>
      <div className="mt-[19px] flex h-[88px] w-[88px] items-center justify-center bg-white">
        <Fit className="w-[39px] text-[17px] font-bold text-[#3f48cc]">FM-C</Fit>
      </div>
      <div className="ml-[3px] mt-[21px] flex gap-[25px]">
        <button className="flex h-[52px] w-[52px] items-center justify-center rounded-full bg-linear-to-tr from-[#00e0ff] to-[#50a0ff]">
          <svg viewBox="152 560 96 84" className="ml-px h-7 w-8" fill="none" stroke="#0b0b0b" strokeWidth="3.2" strokeLinejoin="round">
            <path d="M157 586H176V620H157ZM176 586L206 565V641L176 620M222 588Q232 603 222 619M232 579Q250 603 232 627" />
          </svg>
        </button>
        <button className="flex h-[52px] w-[52px] items-center justify-center rounded-full border border-[#3c3c3c] bg-[#181818]">
          <svg viewBox="402 568 54 70" className="h-[23px] w-[18px]" fill="none" stroke="#fff" strokeWidth="3.2" strokeLinejoin="round">
            <path d="M406 573H411L441 603 411 633H406ZM452 573V633" />
          </svg>
        </button>
      </div>
    </section>
  );
}

function ChargeCard() {
  return (
    <section className={`flex h-[238px] w-[186px] flex-col items-center ${tileClass}`}>
      <Fit className="mt-[10px] w-[43px] text-[17px] font-light leading-6 text-[#8a8a8a]">Laden</Fit>
      <div className="mt-[58px] flex h-[41px] w-[137px] items-center rounded-[11px] bg-[#262626] p-1">
        <div className="h-[33px] w-[19px] rounded-[6px] bg-[#f63232]" />
        <div className="h-[33px] w-[50px] bg-[#363636]" />
        <div className="flex h-[33px] w-4 justify-center rounded-[5px] bg-[#1a1a1a]"><div className="h-full w-[3px] bg-white" /></div>
        <div className="h-[33px] w-[18px] bg-[#363636]" />
        <div className="ml-[2px] h-[33px] w-6 rounded-r-[8px] bg-[repeating-linear-gradient(135deg,#363636_0_5px,#262626_5px_11px)]" />
      </div>
      <div className="mr-[9px] mt-[57px] flex items-center">
        <svg viewBox="784 618 92 70" className="h-[23px] w-[31px]" fill="none" stroke="#fff" strokeWidth="3">
          <path d="M787 627H858V667H787ZM797 627V621H811V627M832 627V621H846V627M797 641H809M834 641H846M840 635V647M795 676H865V636M801 684H872V644" />
        </svg>
        <Fit className="ml-[7px] w-[39px] text-[20px] font-medium leading-[27px]">10%</Fit>
      </div>
    </section>
  );
}

/* ---------- app icons ---------- */

const MusicIcon = () => (
  <svg viewBox="85 66 311 515" preserveAspectRatio="none" className="h-full w-full">
    <defs><linearGradient id="mus" x1="0" y1="0" x2="1" y2="1"><stop offset="0" stopColor="#de1b43" /><stop offset="1" stopColor="#b01c26" /></linearGradient></defs>
    <path fill="url(#mus)" d="M219 268Q219 256 225 252L284 223Q292 221 292 233V362C290 378 280 393 265 393 240 390 243 345 272 342Q281 341 286 347V264L224 294V392C222 412 212 426 197 426 172 422 178 376 206 375Q215 374 219 380Z" />
  </svg>
);
const PhoneIcon = () => (
  <svg viewBox="625 66 311 515" preserveAspectRatio="none" className="h-full w-full">
    <defs><linearGradient id="tel" x1="0" y1="0" x2="1" y2="1"><stop offset="0" stopColor="#7fd24f" /><stop offset="1" stopColor="#4fc357" /></linearGradient></defs>
    <path fill="url(#tel)" d="M796 218Q800 210 808 215L824 234Q831 244 829 265C826 320 804 385 771 427Q763 435 754 431L735 415Q729 407 733 399L749 366Q753 358 757 362L770 375Q790 335 800 285L789 274Q785 270 786 260Z" />
  </svg>
);
const LetterIcon = () => (
  <svg viewBox="937 66 433 515" preserveAspectRatio="none" className="h-full w-full">
    <path fill="#fff" d="M1012 151C1060 151 1110 149 1155 141L1265 138C1284 137 1290 150 1287 165 1285 178 1278 187 1268 188L1163 187 1168 290 1168 420 1172 435 1169 500C1168 525 1136 525 1135 500V432L1132 420V265L1131 235 1128 191 1015 194C993 194 990 155 1012 151Z" />
  </svg>
);
const WeatherIcon = () => (
  <svg viewBox="188 66 433 515" preserveAspectRatio="none" className="h-full w-full" fill="none" stroke="#fff" strokeLinecap="round" strokeLinejoin="round">
    <g strokeWidth="7">
      <path vectorEffect="non-scaling-stroke" d="M292 183C292 158 306 148 322 150S350 162 355 180C360 160 378 155 392 160S415 180 418 210C436 188 447 205 444 225 442 245 436 255 418 258 426 285 418 308 400 309S365 300 358 285C352 315 340 330 322 330S290 325 282 297C276 318 268 320 255 316 235 308 226 290 230 268 231 255 234 250 242 243 226 240 228 230 236 208 246 182 272 180 283 199" />
      <path vectorEffect="non-scaling-stroke" d="M432 171C438 145 445 136 465 137 510 138 538 165 538 215 538 265 515 295 490 295 475 294 462 280 443 267M463 94V108M403 116L417 126M545 114L540 144M570 195L591 183M564 260L586 257M536 311L560 315M444 309L438 337M490 328L500 349" />
    </g>
    <path fill="#fff" strokeWidth="1" d="M277 355Q288 362 290 395 288 420 272 418 257 418 257 395 262 360 277 355ZM321 413Q332 415 335 450 332 474 318 472 303 470 303 450 308 415 321 413ZM372 370Q382 370 389 412 388 434 374 433 358 430 359 405 362 372 372 370Z" />
  </svg>
);

const apps: { name: string; w: string; Icon: () => React.ReactElement }[] = [
  { name: "Radio/Medien", w: "w-[231px]", Icon: MusicIcon },
  { name: "Telefon", w: "w-[120px]", Icon: PhoneIcon },
  { name: "TestApp2", w: "w-[153px]", Icon: LetterIcon },
  { name: "Weather", w: "w-[140px]", Icon: WeatherIcon },
  { name: "TestApp1", w: "w-[153px]", Icon: LetterIcon },
  { name: "TestApp4", w: "w-[154px]", Icon: LetterIcon },
  { name: "TestApp3", w: "w-[153px]", Icon: LetterIcon },
];

/* ---------- climate bar ---------- */

const Cell = ({ children, className = "w-[136px]" }: { children?: React.ReactNode; className?: string }) => (
  <div className={`flex shrink-0 items-center justify-center ${className}`}>{children}</div>
);
const Divider = () => <div className="-mx-px h-12 w-[2px] shrink-0 bg-[#6c7073]" />;
function Pills({ color }: { color: string }) {
  return (
    <Cell>
      <div className="flex flex-col gap-[12.5px]">
        {[0, 1, 2].map((i) => (<div key={i} className={`h-[7px] w-5 rounded-[3px] ${color}`} />))}
      </div>
    </Cell>
  );
}
function Temp({ className = "" }: { className?: string }) {
  return (
    <div className={`flex items-baseline font-semibold ${className}`}>
      <Fit className="w-[73px] text-[64px] leading-[70px]">20</Fit>
      <Fit className="w-[40px] text-[47px] leading-[70px]">.0</Fit>
    </div>
  );
}
function SeatIcon({ flip = false }: { flip?: boolean }) {
  return (
    <svg viewBox="332 153 113 168" preserveAspectRatio="none" className={`h-14 w-[52px] ${flip ? "-scale-x-100" : ""}`} fill="none" stroke="#fff" strokeWidth="2.1" strokeLinejoin="round">
      <g>
        <path vectorEffect="non-scaling-stroke" d="M368 192C360 175 366 158 380 158 390 162 386 182 368 192M370 196C382 188 398 200 397 222 390 234 376 222 370 198M366 206C376 220 372 240 356 242 342 240 348 216 366 206M361 204C346 210 335 200 337 178 344 168 356 180 361 204" />
        <path vectorEffect="non-scaling-stroke" d="M422 164L434 158Q438 157 438 163 442 190 440 225 438 258 430 273L426 275 409 263Q408 250 414 238L420 208 429 206V192L423 188Z" />
        <path vectorEffect="non-scaling-stroke" d="M367 268C363 290 377 295 371 318M381 268C377 290 391 295 385 318M396 268C392 290 406 295 400 318M357 272L350 276Q352 296 360 310M409 280L415 283 423 292 416 308H410" />
      </g>
      <path fill="#fff" stroke="none" d="M367 254L372 273H362ZM381 254L386 273H376ZM396 254L401 273H391Z" />
    </svg>
  );
}
const HeatWaves = ({ dx = 0, dy = 0 }: { dx?: number; dy?: number }) => (
  <g transform={`translate(${dx} ${dy})`}>
    <path vectorEffect="non-scaling-stroke" d="M898 195C893 220 907 230 899 255M914 195C909 220 923 230 915 255M930 195C925 220 939 230 931 255" />
    <path fill="#fff" stroke="none" d="M898 177L903 198H893ZM914 177L919 198H909ZM930 177L935 198H925Z" />
  </g>
);

export default function App() {
  return (
    <div className="flex h-[1260px] w-[2240px] flex-col overflow-hidden bg-[linear-gradient(to_bottom,#000_0px,rgba(0,0,0,0.95)_30px,rgba(0,0,0,0.8)_70px,rgba(0,0,0,0.5)_130px,rgba(0,0,0,0.2)_200px,transparent_300px,transparent_1000px,rgba(0,0,0,0.55)_1111px,rgba(0,0,0,0.88)_1165px,#000_1235px),linear-gradient(20deg,#25507d_0%,#1e5379_25%,#0d5d73_48%,#04646f_75%,#036470_100%)] font-['Noto_Sans',sans-serif] text-white">
      <div className="flex h-[69px] shrink-0 justify-center pt-4">
        <div className="h-[6px] w-28 rounded-full bg-[#808080]" />
      </div>

      <div className="flex h-[492px] shrink-0 items-center justify-center">
        <div className="mb-[28px] mr-[116px]"><PlusButton /></div>
        <div className="h-[492px] w-[690px] rounded-[9px] border-[3px] border-white bg-black p-[3px] shadow-[0_3px_8px_rgba(0,0,0,0.4)]">
          <div className="relative h-[480px] w-[678px] overflow-hidden">
            <CityMap />
            <div className="absolute left-[14px] top-[14px] flex">
              <RouteCard w="w-[278px]" icon={<House />} title="Zuhause" tw="w-[74px]" time={"20\u2009min"} mw="w-[58px]" />
              <div className="ml-[17px] flex">
                <RouteCard w="w-[274px]" icon={<Case />} title="Arbeit" tw="w-[53px]" time={"24\u2009min"} mw="w-[58px]" />
              </div>
              <div className="ml-[17px] flex h-[81px] w-16 items-center justify-center rounded-[7px] bg-white shadow-[0_2px_4px_rgba(0,0,0,0.35)]">
                <svg viewBox="-39 -39 78 78" className="h-[26px] w-[26px]"><Pin x={0} y={0}><Fuel /></Pin></svg>
              </div>
            </div>
            <button className="absolute left-[22px] top-[135px] flex h-[52px] w-[52px] items-center justify-center rounded-full bg-white">
              <svg viewBox="124 500 86 54" className="h-[18px] w-[29px]" fill="none" stroke="#000" strokeWidth="3">
                <path d="M140 512Q150 504 166 504M176 504Q206 508 207 527 205 548 174 550M164 550Q148 550 141 540M196 516Q207 526 196 540" />
                <path d="M127 523L138 515V532Z" fill="#000" />
                <text x="171" y="536" textAnchor="middle" fontSize="29" fontWeight="500" fill="#000" stroke="none" fontFamily="'Noto Sans', sans-serif">3D</text>
              </svg>
            </button>
            <button className="absolute bottom-[22px] right-[22px] flex h-[52px] w-[52px] items-center justify-center rounded-full bg-white">
              <svg viewBox="852 546 88 86" className="h-[29px] w-[29px]" fill="none" stroke="#111" strokeWidth="3.4"><circle cx="887" cy="580" r="31" /><path d="M909 603L936 630" /></svg>
            </button>
          </div>
        </div>
        <div className="ml-[17px] flex flex-col gap-4">
          <IdaCard />
          <div className="flex gap-4"><RadioCard /><ChargeCard /></div>
        </div>
        <div className="mb-[28px] ml-[115px]"><PlusButton /></div>
      </div>

      <main className="mx-4 mt-8 h-[518px] shrink-0 rounded-[24px] bg-[#262626]">
        <div className="flex justify-between pl-[39px] pr-12 pt-7">
          <div className="pt-[2px]">
            <Fit className="w-[459px] text-[42px] font-semibold leading-[50px]">Home Screen anpassen</Fit>
            <Fit className="w-[728px] text-[39px] font-light leading-[52px]">Kachel auswählen und neue Seiten erstellen</Fit>
          </div>
          <div className="flex gap-8">
            <button className="flex h-[104px] w-[378px] items-center justify-center rounded-full bg-[#d0021b] pb-[3px] shadow-[0_4px_8px_rgba(0,0,0,0.35)]">
              <Fit className="w-[221px] text-[39px] font-light leading-[54px]">Seite löschen</Fit>
            </button>
            <button className="flex h-[104px] w-[304px] items-center justify-center rounded-full bg-linear-to-tr from-[#00e0ff] from-10% to-[#55a0ff] pb-[3px] text-black shadow-[0_4px_8px_rgba(0,0,0,0.35)]">
              <Fit className="w-[96px] text-[39px] font-light leading-[54px]">Fertig</Fit>
            </button>
          </div>
        </div>
        <div className="ml-[68px] mt-[56px] flex">
          {apps.map(({ name, w, Icon }) => (
            <div key={name} className="flex w-[296px] shrink-0 flex-col items-center">
              <div className="relative h-[172px] w-[172px] rounded-[18px] bg-[#353535] shadow-[0_14px_14px_-8px_rgba(0,0,0,0.3)]">
                <Icon />
                <div className="absolute inset-0 rounded-[18px] border-2 border-[#555]" />
              </div>
              <Fit className={`mt-[17px] text-[40px] font-light leading-[54px] ${w}`}>{name}</Fit>
            </div>
          ))}
        </div>
      </main>

      <footer className="flex h-[149px] shrink-0 items-center bg-[radial-gradient(ellipse_330px_150px_at_1120px_0px,rgba(38,100,145,0.38),transparent)] pb-0 pt-[5px]">
        <Temp className="w-[172px] shrink-0 pl-[38px]" />
        <Divider />
        <Cell className="w-[134px]">
          <div className="relative flex justify-center">
            <Fit className="w-[62px] text-[23px] font-medium leading-7">CLIMA</Fit>
            <div className="absolute top-[36px]"><Fit className="w-[47px] text-[17px] font-medium leading-[22px] text-[#f5a623]">A/C OFF</Fit></div>
          </div>
        </Cell>
        <Cell className="w-[138px]"><Fit className="w-[57px] text-[23px] font-medium leading-7">AUTO</Fit></Cell>
        <Cell className="w-[134px]"><Fit className="mb-[3px] w-[57px] text-[37px] leading-[50px]">A/C</Fit></Cell>
        <Divider />
        <Cell className="w-[17px]" />
        <Pills color="bg-[#044a70]" />
        <Cell><SeatIcon /></Cell>
        <Pills color="bg-[#620a1c]" />
        <Cell className="w-[234px]">
          <div className="h-[70px] w-[70px] rounded-[13px] bg-[linear-gradient(45deg,#00e0ff_20%,#50a5ff_85%)] p-[5px]">
            <div className="h-full w-full rounded-[8px] bg-linear-to-b from-[#0d2030] to-[#040a13]" />
          </div>
        </Cell>
        <Pills color="bg-[#044a70]" />
        <Cell><SeatIcon flip /></Cell>
        <Pills color="bg-[#560a17]" />
        <Cell className="w-[17px]" />
        <Divider />
        <Cell className="w-[134px]">
          <svg viewBox="624 188 107 86" preserveAspectRatio="none" className="h-[29px] w-[61px]" fill="none" stroke="#fff" strokeWidth="2.2">
            <path vectorEffect="non-scaling-stroke" d="M657 255H705Q707 268 713 268T720 256Q727 254 726 238V220L710 213C702 198 692 194 682 194 665 194 658 203 650 219L634 226Q628 232 629 253L637 257Q640 269 647 268T657 255Z" />
            <path vectorEffect="non-scaling-stroke" d="M684 212Q668 214 668 228 669 241 684 241 697 240 698 222M689 222H700V240" />
          </svg>
        </Cell>
        <Cell>
          <div className="mt-[1px] flex flex-col items-center">
            <svg viewBox="871 150 88 108" preserveAspectRatio="none" className="h-9 w-[50px]" fill="none" stroke="#fff" strokeWidth="2.2">
              <path vectorEffect="non-scaling-stroke" d="M887 231H880Q874 230 874 222V163Q875 154 881 154H948Q954 155 955 163V222Q954 231 949 231H943" />
              <HeatWaves />
            </svg>
            <Fit className="mt-px w-[50px] text-[22px] font-semibold leading-[26px]">REAR</Fit>
          </div>
        </Cell>
        <Cell>
          <div className="mt-[-1px] flex flex-col items-center">
            <svg viewBox="1104 145 95 113" preserveAspectRatio="none" className="h-[38px] w-[54px]" fill="none" stroke="#fff" strokeWidth="2.2">
              <path vectorEffect="non-scaling-stroke" d="M1122 221L1107 173Q1150 124 1196 173L1181 221" />
              <HeatWaves dx={237} />
            </svg>
            <Fit className="mt-px w-[45px] text-[22px] font-semibold leading-[26px]">MAX</Fit>
          </div>
        </Cell>
        <Divider />
        <Temp className="pl-[23px]" />
      </footer>
    </div>
  );
}
